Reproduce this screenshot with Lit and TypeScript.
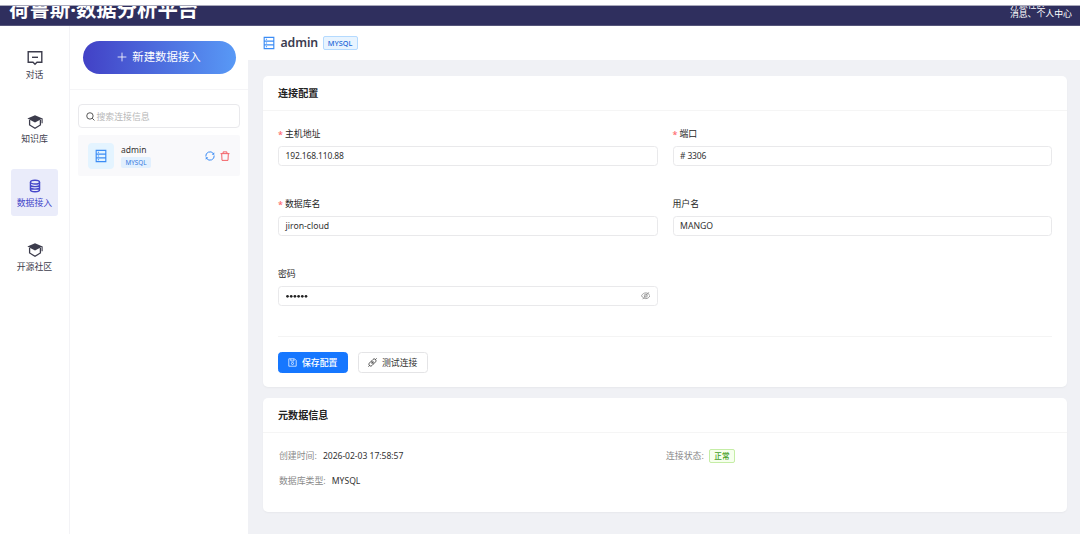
import { LitElement, html, css, svg, nothing } from "lit";
import { customElement, property } from "lit/decorators.js";

const icons: Record<string, unknown> = {
  chat: svg`<path d="M1.200 1.700h13.600v10.600H10L8 14.200l-2-1.900H1.200z" fill="none" stroke="currentColor" stroke-width="1.400"/><path d="M5 7.300h6" stroke="currentColor" stroke-width="1.400"/>`,
  cap: svg`<path d="M8 1.200L0.400 4.600 8 8.400l7.600-3.800z" fill="currentColor"/><path d="M2.600 6v5L8 14.200l5.400-3.200V6" fill="none" stroke="currentColor" stroke-width="1.300"/><path d="M15.100 4.600v4.600" stroke="currentColor" stroke-width="1.100"/>`,
  database: svg`<g fill="none" stroke="currentColor" stroke-width="1.600"><ellipse cx="8" cy="3.600" rx="5.200" ry="2.100"/><path d="M2.800 3.600v8.800c0 1.200 2.400 2.200 5.200 2.200s5.200-1 5.200-2.200V3.600M2.800 6.600c0 1.200 2.400 2.100 5.200 2.100s5.200-.9 5.200-2.100M2.800 9.500c0 1.200 2.400 2.100 5.200 2.100s5.200-.9 5.200-2.100"/></g>`,
  server: svg`<path d="M2.500 1.500h11v13h-11zM2.500 5.800h11M2.500 10.200h11" fill="none" stroke="currentColor" stroke-width="1.300"/><path d="M4.400 3.100h1.400v1.200H4.400zM4.400 7.400h1.400v1.200H4.400zM4.400 11.700h1.400v1.200H4.400z" fill="currentColor"/>`,
  plus: svg`<path d="M8 1v14M1 8h14" stroke="currentColor" stroke-width="1.300"/>`,
  search: svg`<circle cx="7" cy="7" r="5.700" fill="none" stroke="currentColor" stroke-width="1.600"/><path d="M11 11l4 4" stroke="currentColor" stroke-width="1.600"/>`,
  sync: svg`<g fill="none" stroke="currentColor" stroke-width="1.600"><path d="M1.300 8.800A6.700 6.700 0 0 1 13.300 4M14.700 7.200A6.700 6.700 0 0 1 2.700 12"/></g><path d="M14.800 2v4h-4zM1.200 14v-4h4z" fill="currentColor"/>`,
  trash: svg`<path d="M.8 4.200h14.400M5 4V1.400h6V4M2.700 4.300l.5 10.700h9.600l.5-10.700" fill="none" stroke="currentColor" stroke-width="1.600"/>`,
  save: svg`<g fill="none" stroke="currentColor" stroke-width="1.300"><path d="M1.400 1.400h10.200l3 3v10.200H1.400z"/><path d="M5 1.600v3.700h5.500V1.600"/><circle cx="8" cy="9.700" r="1.900"/></g>`,
  link: svg`<g fill="none" stroke="currentColor" stroke-width="1.500"><path d="M6.200 5.300L8.900 2.600c1.300-1.300 3.200-1.200 4.400-.1 1.200 1.200 1.300 3.200 0 4.500l-2.700 2.700zM5.300 6.200L2.600 8.900c-1.300 1.300-1.300 3.300-.1 4.500s3.200 1.300 4.500 0l2.700-2.700zM13.300 2.700L15.300.7M2.700 13.300L.7 15.300M6.300 9.700l1.300-1.300M8.400 7.600l1.300-1.300"/></g>`,
  eye: svg`<g fill="none" stroke="currentColor" stroke-width="1.400"><path d="M.8 8c1.700-3.200 4.200-4.800 7.200-4.800s5.500 1.600 7.200 4.800c-1.700 3.200-4.200 4.800-7.200 4.800S2.500 11.200.8 8z"/><circle cx="8" cy="8" r="2.500"/><path d="M2.800 13.800L13.200 2.200"/></g>`,
};

@customElement("ui-icon")
class UiIcon extends LitElement {
  @property() name = "";
  static styles = css`
    :host { display: inline-flex; flex: none; width: 10px; height: 10px; }
    svg { display: block; width: 100%; height: 100%; }
  `;
  render() {
    return html`<svg viewBox="0 0 16 16">${icons[this.name]}</svg>`;
  }
}

@customElement("form-field")
class FormField extends LitElement {
  @property() label = "";
  @property() value = "";
  @property({ type: Boolean }) required = false;
  @property({ type: Boolean }) secret = false;
  static styles = css`
    :host { display: block; height: 70px; }
    .label { display: flex; height: 14px; margin-bottom: 5px; line-height: 14px; color: #262626; }
    .star { width: 7px; color: #ff7074; font-size: 9px; line-height: 15px; font-weight: 600; }
    .input {
      display: flex; align-items: center; justify-content: space-between;
      box-sizing: border-box; height: 20px; padding: 0 6.500px;
      border: 1px solid #e9e9eb; border-radius: 3.500px; background: #fff; color: #333;
    }
    .value { font-size: 8.700px; }
    .value.num { font-size: 8.500px; letter-spacing: -0.150px; }
    .dots { display: flex; gap: 1px; padding-left: .5px; }
    .dots svg { display: block; width: 22px; height: 4px; }
    ui-icon { color: #8c8c8c; width: 9.500px; height: 9.500px; }
  `;
  render() {
    const num = /\d/.test(this.value);
    return html`
      <div class="label">${this.required ? html`<span class="star">*</span>` : nothing}${this.label}</div>
      <div class="input">
        ${this.secret
          ? html`<span class="dots"><svg viewBox="0 0 22 4">${[0, 1, 2, 3, 4, 5].map((i) => svg`<circle cx=${1.5 + i * 3.7} cy="2.300" r="1.350" fill="#222"/>`)}</svg></span><ui-icon name="eye"></ui-icon>`
          : html`<span class="value ${num ? "num" : ""}">${this.value}</span>`}
      </div>`;
  }
}

const nav = [
  { icon: "chat", text: "对话" },
  { icon: "cap", text: "知识库" },
  { icon: "database", text: "数据接入", active: true },
  { icon: "cap", text: "开源社区" },
];

@customElement("app-root")
class AppRoot extends LitElement {
  static styles = css`
    :host {
      display: flex; flex-direction: column; width: 1080px; height: 534px; overflow: hidden;
      background: #fff; color: #333;
      font: 8.900px/14px "Noto Sans", "Noto Sans CJK SC", sans-serif;
    }
    * { box-sizing: border-box; }
    .top {
      display: flex; justify-content: space-between; align-items: flex-end;
      height: 21px; margin-top: 5px; padding: 0 8px 0 9px; overflow: hidden; flex: none;
      background: #2f2f5e; color: #fff; border-top: 1px solid #a9a9bb; border-bottom: 1px solid #55557a;
    }
    .brand { font-size: 20.400px; line-height: 24px; font-weight: 700; margin-bottom: 4.500px; white-space: nowrap; }
    .links { line-height: 8.500px; margin-bottom: 7px; white-space: nowrap; }
    .body { display: flex; flex: 1; min-height: 0; }
    .nav { width: 70px; border-right: 1px solid #f3f3f6; padding-top: 16px; display: flex; flex-direction: column; align-items: center; gap: 17px; }
    .item { width: 47px; height: 47px; padding-top: 9px; display: flex; flex-direction: column; align-items: center; gap: 2px; border-radius: 3px; color: #3c3c4c; white-space: nowrap; }
    .nav .item { margin-top: -1px; margin-bottom: 1px; }
    .item ui-icon { width: 16px; height: 16px; }
    .item.on { background: #eaecfa; color: #4547c9; }
    .item.on ui-icon { padding: 0 1px; }
    .side { width: 178px; }
    .new { height: 64px; padding: 15px 12px 0 12.500px; border-bottom: 1px solid #f5f5f7; }
    .newbtn {
      display: flex; align-items: center; justify-content: center; gap: 5px; height: 33px; width: 153px; border-radius: 17px;
      background: linear-gradient(90deg, #4241c6, #5899f6); color: #fff; font-size: 11.400px; padding-bottom: 1px;
    }
    .list { padding: 14px 8px 0; }
    .search { display: flex; align-items: center; gap: 2px; height: 24px; width: 162px; padding: 1px 7px 0 6.500px; border: 1px solid #e9e9ec; border-radius: 4px; color: #b7b7b7; }
    .search ui-icon { color: #444; width: 9px; height: 9px; }
    .conn { display: flex; align-items: center; width: 162px; height: 41px; margin-top: 7px; padding: 0 10px; background: #f9f9fb; border-radius: 2px; }
    .avatar { display: flex; align-items: center; justify-content: center; width: 26px; height: 26px; margin-right: 7px; border-radius: 4px; background: #e4f4ff; color: #3b8cf5; }
    .avatar ui-icon { width: 14px; height: 14px; }
    .meta { flex: 1; line-height: 12px; font-size: 8.500px; }
    .mini { display: block; width: 30px; height: 11px; margin-top: 1px; border-radius: 2px; background: #e2f0fe; color: #3478e0; font-size: 6.300px; line-height: 11px; text-align: center; }
    .acts { display: flex; gap: 5px; color: #3b8cf5; }
    .acts .del { color: #f36267; }
    .main { flex: 1; background: #f0f1f5; }
    .head { display: flex; align-items: center; height: 34px; padding: 0 14px; background: #fff; color: #3c3c50; }
    .head ui-icon { width: 14px; height: 14px; color: #3b8cf5; }
    .name { width: 37px; font-size: 12.300px; font-weight: 600; letter-spacing: -0.100px; margin: 0 5px 0 4.500px; }
    .tag { width: 35px; height: 14px; text-align: center; border: 1px solid #b4daff; border-radius: 2px; background: #e8f4ff; color: #2468d8; font-size: 7.300px; font-weight: 500; line-height: 12.500px; }
    .cards { display: flex; flex-direction: column; gap: 11px; padding: 16px 13px 0 15px; }
    .card { background: #fff; border-radius: 5px; box-shadow: 0 1px 2px rgba(0, 0, 0, .04); }
    .title { height: 35px; padding: 0 15px; line-height: 35px; border-bottom: 1px solid #f5f5f5; font-size: 10.100px; font-weight: 700; color: #222; }
    .form { display: grid; grid-template-columns: 1fr 1fr; column-gap: 15px; padding: 16px 15px 0; height: 225px; }
    .foot { display: flex; gap: 10px; margin: 0 15px; padding: 15px 0; border-top: 1px solid #f4f4f4; height: 51px; }
    .btn { display: flex; align-items: center; gap: 5px; width: 70px; height: 21px; padding: 0 9px; border: 1px solid #e4e4e6; border-radius: 3.500px; color: #333; white-space: nowrap; }
    .btn ui-icon { width: 9px; height: 9px; }
    .btn.primary { background: #1677ff; border-color: #1677ff; color: #fff; font-weight: 500; }
    .info { height: 79px; padding: 15px 16px 0; display: grid; grid-template-columns: 387px 1fr; grid-auto-rows: 16px; row-gap: 8.500px; color: #8a8a8a; }
    .info div { display: flex; align-items: center; }
    .info b { font-weight: 400; font-size: 8.600px; color: #333; margin-left: 6px; }
    .info b.num { letter-spacing: -0.040px; }
    .ok { width: 26px; height: 14px; margin-left: 5px; text-align: center; border: 1px solid #c5eda6; border-radius: 2px; background: #f6ffed; color: #44a01f; font-size: 7.600px; font-weight: 500; line-height: 12px; }
  `;
  render() {
    return html`
      <header class="top">
        <div class="brand">荷鲁斯·数据分析平台</div>
        <div class="links">开源社区<br>消息、个人中心</div>
      </header>
      <div class="body">
        <nav class="nav">
          ${nav.map((n) => html`<div class="item ${n.active ? "on" : ""}"><ui-icon name=${n.icon}></ui-icon><span>${n.text}</span></div>`)}
        </nav>
        <aside class="side">
          <div class="new"><div class="newbtn"><ui-icon name="plus"></ui-icon>新建数据接入</div></div>
          <div class="list">
            <div class="search"><ui-icon name="search"></ui-icon>搜索连接信息</div>
            <div class="conn">
              <span class="avatar"><ui-icon name="server"></ui-icon></span>
              <div class="meta">admin<span class="mini">MYSQL</span></div>
              <div class="acts"><ui-icon name="sync"></ui-icon><ui-icon class="del" name="trash"></ui-icon></div>
            </div>
          </div>
        </aside>
        <main class="main">
          <div class="head"><ui-icon name="server"></ui-icon><span class="name">admin</span><span class="tag">MYSQL</span></div>
          <div class="cards">
            <section class="card">
              <div class="title">连接配置</div>
              <div class="form">
                <form-field required label="主机地址" value="192.168.110.88"></form-field>
                <form-field required label="端口" value="# 3306"></form-field>
                <form-field required label="数据库名" value="jiron-cloud"></form-field>
                <form-field label="用户名" value="MANGO"></form-field>
                <form-field secret label="密码"></form-field>
              </div>
              <div class="foot">
                <div class="btn primary"><ui-icon name="save"></ui-icon>保存配置</div>
                <div class="btn"><ui-icon name="link"></ui-icon>测试连接</div>
              </div>
            </section>
            <section class="card">
              <div class="title">元数据信息</div>
              <div class="info">
                <div>创建时间:<b class="num">2026-02-03 17:58:57</b></div>
                <div>连接状态:<span class="ok">正常</span></div>
                <div>数据库类型:<b>MYSQL</b></div>
              </div>
            </section>
          </div>
        </main>
      </div>`;
  }
}
